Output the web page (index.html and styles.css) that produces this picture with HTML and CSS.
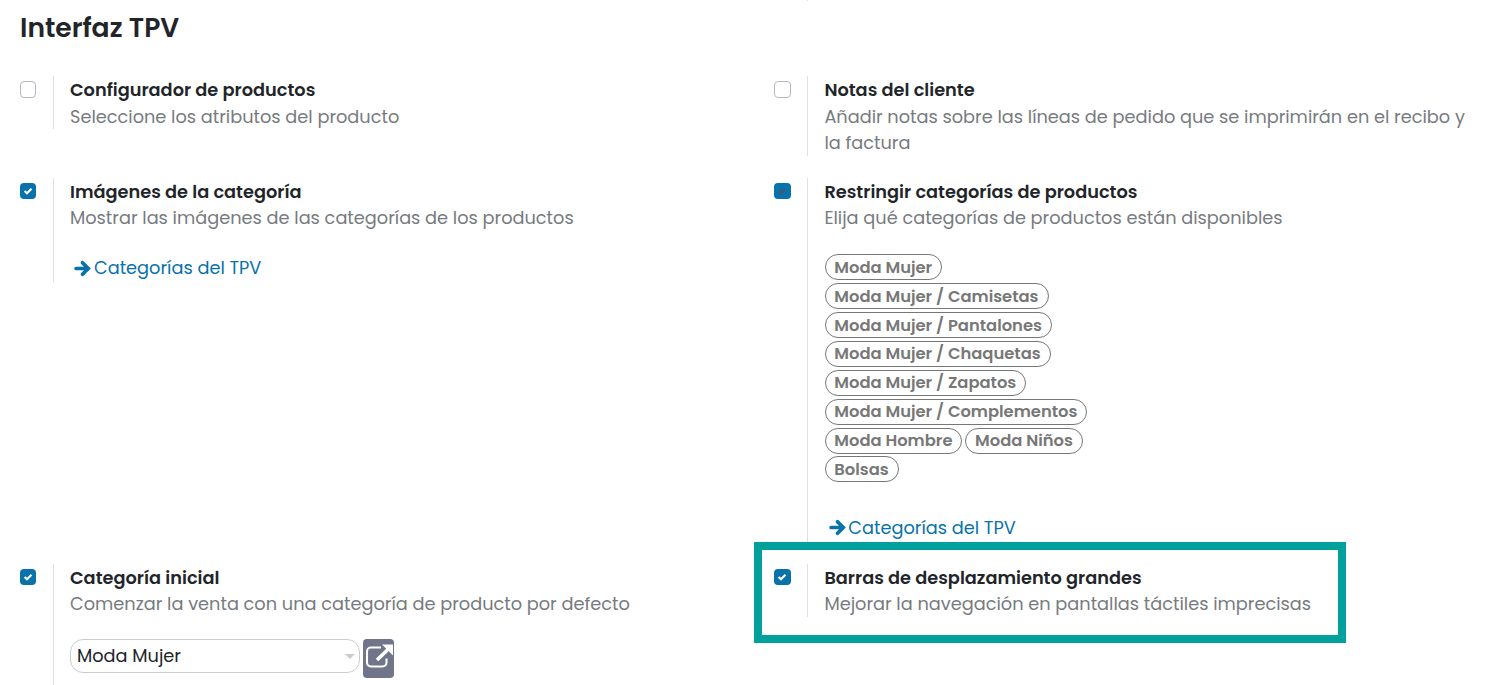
FILE: index.html
```html
<!DOCTYPE html>
<html lang="es">
<head>
<meta charset="utf-8">
<title>Interfaz TPV</title>
<link rel="stylesheet" href="styles.css">
</head>
<body>
<svg class="symbols" aria-hidden="true">
  <symbol id="check" viewBox="0 0 16 16"><path d="M4.600 8l2.400 2.300L11.500 5.700" fill="none" stroke="currentColor" stroke-width="2.100"/></symbol>
  <symbol id="arrow" viewBox="0 0 16 16"><path d="M2 8H12.500M8 2.600L13.400 8 8 13.400" fill="none" stroke="currentColor" stroke-width="3.500" stroke-linecap="round"/></symbol>
</svg>
<main class="settings">
  <h2 class="heading">Interfaz TPV</h2>
  <div class="previous-divider"></div>
  <section class="grid">
    <article class="setting">
      <span class="checkbox"></span>
      <div class="body short">
        <h3 class="title">Configurador de productos</h3>
        <p class="desc lower">Seleccione los atributos del producto</p>
      </div>
    </article>
    <article class="setting">
      <span class="checkbox"></span>
      <div class="body">
        <h3 class="title">Notas del cliente</h3>
        <p class="desc lower">Añadir notas sobre las líneas de pedido que se imprimirán en el recibo y<br>la factura</p>
      </div>
    </article>
    <article class="setting">
      <span class="checkbox checked"><svg><use href="#check"/></svg></span>
      <div class="body">
        <h3 class="title">Imágenes de la categoría</h3>
        <p class="desc">Mostrar las imágenes de las categorías de los productos</p>
        <a class="link"><svg><use href="#arrow"/></svg><span>Categorías del TPV</span></a>
      </div>
    </article>
    <article class="setting">
      <span class="checkbox checked muted"><svg><use href="#check"/></svg></span>
      <div class="body tall">
        <h3 class="title">Restringir categorías de productos</h3>
        <p class="desc">Elija qué categorías de productos están disponibles</p>
        <div class="tags">
          <span class="tag">Moda Mujer</span>
          <span class="tag">Moda Mujer / Camisetas</span>
          <span class="tag">Moda Mujer / Pantalones</span>
          <span class="tag">Moda Mujer / Chaquetas</span>
          <span class="tag">Moda Mujer / Zapatos</span>
          <span class="tag">Moda Mujer / Complementos</span>
          <span class="tag">Moda Hombre</span>
          <span class="tag">Moda Niños</span>
          <span class="tag">Bolsas</span>
        </div>
        <a class="link"><svg><use href="#arrow"/></svg><span>Categorías del TPV</span></a>
      </div>
    </article>
    <article class="setting">
      <span class="checkbox checked"><svg><use href="#check"/></svg></span>
      <div class="body last">
        <h3 class="title">Categoría inicial</h3>
        <p class="desc">Comenzar la venta con una categoría de producto por defecto</p>
        <div class="field">
          <div class="select"><span>Moda Mujer</span><i class="caret"></i></div>
          <button class="open" aria-label="Abrir">
            <svg viewBox="0 0 31 39"><path d="M18 8.500H8a4 4 0 0 0-4 4v11a4 4 0 0 0 4 4h11.500a4 4 0 0 0 4-4V19.500" fill="none" stroke="#fff" stroke-width="2.100"/><path d="M14 21L26 9.500" stroke="#fff" stroke-width="3.600"/><path d="M19 5.500h11V16.500z" fill="#fff"/></svg>
          </button>
        </div>
      </div>
    </article>
    <article class="setting highlighted">
      <span class="checkbox checked"><svg><use href="#check"/></svg></span>
      <div class="body">
        <h3 class="title">Barras de desplazamiento grandes</h3>
        <p class="desc">Mejorar la navegación en pantallas táctiles imprecisas</p>
      </div>
    </article>
  </section>
</main>
</body>
</html>
```
FILE: styles.css
```css
*, *::before { box-sizing: border-box; }
body { margin: 0; background: #fff; color: #212529; font: 17.74px/26px Poppins, Inter, sans-serif; overflow: hidden; }
.symbols { position: absolute; width: 0; height: 0; }
.settings { height: 685px; padding-left: 20px; overflow: hidden; position: relative; }
.heading { margin: 0; height: 76px; padding-top: 8px; font-size: 26.6px; line-height: 40px; font-weight: 600; }
.previous-divider { position: absolute; left: 807px; top: 0; width: 1px; height: 1px; background: #dee2e6; }
.grid { display: grid; grid-template-columns: 754.4px 718px; grid-template-rows: 80px 364px auto; row-gap: 22px; align-items: start; }
.setting { display: flex; position: relative; }
.checkbox { width: 16.3px; height: 17px; margin: 5px 16.7px 0 0; border: 1px solid #b5b8c4; border-radius: 4px; flex: none; }
.checked { height: 16px; background: #0872aa; border: 0; color: #fff; }
.checked svg { display: block; width: 16px; height: 16px; }
.muted { color: #4b5670; }
.body { border-left: 1px solid #dfe0e3; padding-left: 16px; flex: none; white-space: nowrap; }
.short { height: 53px; }
.tall { height: 364px; }
.last { height: 130px; }
.title { margin: 0; padding-top: 1px; font-size: 17.74px; line-height: 26px; font-weight: 600; }
.desc { margin: 0; color: #777b80; }
.lower { padding-top: 1px; }
.link { display: flex; align-items: center; gap: 2.7px; height: 27px; padding-bottom: 1px; margin: 24px 0 0 4.3px; color: #0872aa; }
.link span { line-height: 26px; }
.link svg { width: 17px; height: 17px; }
.tags { display: flex; flex-wrap: wrap; width: 290px; gap: 2.82px 3px; margin: 23.45px 0 0 0.3px; }
.tag { height: 26.04px; padding: 0.45px 9px 0 8.6px; border: 1px solid #777; border-radius: 13px; color: #777; font-size: 16.35px; line-height: 24.6px; font-weight: 600; }
.tags + .link { margin-top: 32.3px; }
.field { display: flex; gap: 3px; margin-top: 22px; }
.select { display: flex; align-items: center; justify-content: space-between; width: 290px; height: 34px; padding: 0 4px 0 6px; border: 1px solid #ccc; border-radius: 13px; color: #212529; }
.caret { border: 5px solid transparent; border-top-color: #ccc; border-bottom: 0; }
.open { width: 31px; height: 39px; padding: 0; border: 0; border-radius: 4px; background: #71758a; }
.open svg { display: block; width: 31px; height: 39px; }
.highlighted::before { content: ""; position: absolute; left: -20.4px; top: -22px; width: 592px; height: 101px; border: 8px solid #00a09d; }
```
